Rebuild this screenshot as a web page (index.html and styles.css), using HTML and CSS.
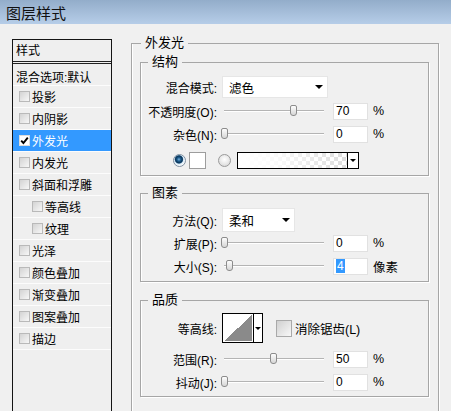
FILE: index.html
```html
<!DOCTYPE html>
<html>
<head>
<meta charset="utf-8">
<title>图层样式</title>
<link rel="stylesheet" href="styles.css">
</head>
<body>
<div class="titlebar">图层样式</div>
<div class="main">
  <div class="sidebar">
    <div class="side-head">样式</div>
    <div class="side-item plain">混合选项:默认</div>
    <div class="side-item"><span class="cb"></span>投影</div>
    <div class="side-item"><span class="cb"></span>内阴影</div>
    <div class="side-item selected"><span class="cb checked"><svg width="9" height="9" viewBox="0 0 9 9"><path d="M1.2 4.6 L3.4 7 L7.8 1.6" fill="none" stroke="#000" stroke-width="1.9"/></svg></span>外发光</div>
    <div class="side-item"><span class="cb"></span>内发光</div>
    <div class="side-item"><span class="cb"></span>斜面和浮雕</div>
    <div class="side-item sub"><span class="cb"></span>等高线</div>
    <div class="side-item sub"><span class="cb"></span>纹理</div>
    <div class="side-item"><span class="cb"></span>光泽</div>
    <div class="side-item"><span class="cb"></span>颜色叠加</div>
    <div class="side-item"><span class="cb"></span>渐变叠加</div>
    <div class="side-item"><span class="cb"></span>图案叠加</div>
    <div class="side-item"><span class="cb"></span>描边</div>
  </div>

  <fieldset class="group outer">
    <legend>外发光</legend>

    <fieldset class="group inner g-struct">
      <legend>结构</legend>
      <div class="row">
        <span class="lbl">混合模式:</span>
        <div class="select sel-wide"><span>滤色</span><span class="tri"></span></div>
      </div>
      <div class="row r2">
        <span class="lbl">不透明度(O):</span>
        <div class="slider"><div class="track"></div><div class="thumb" style="left:68px"></div></div>
        <div class="num">70</div><span class="unit">%</span>
      </div>
      <div class="row r1">
        <span class="lbl">杂色(N):</span>
        <div class="slider"><div class="track"></div><div class="thumb" style="left:-1px"></div></div>
        <div class="num">0</div><span class="unit">%</span>
      </div>
      <div class="row r4 colors">
        <span class="radio on"></span>
        <span class="swatch"></span>
        <span class="radio"></span>
        <div class="gradbox"><span class="gradfill"></span><span class="gdd"><span class="tri small"></span></span></div>
      </div>
    </fieldset>

    <fieldset class="group inner g-elem">
      <legend>图素</legend>
      <div class="row">
        <span class="lbl">方法(Q):</span>
        <div class="select sel-narrow"><span>柔和</span><span class="tri"></span></div>
      </div>
      <div class="row r1">
        <span class="lbl">扩展(P):</span>
        <div class="slider"><div class="track"></div><div class="thumb" style="left:-1px"></div></div>
        <div class="num">0</div><span class="unit">%</span>
      </div>
      <div class="row r1">
        <span class="lbl">大小(S):</span>
        <div class="slider"><div class="track"></div><div class="thumb" style="left:4px"></div></div>
        <div class="num"><span class="hl">4</span></div><span class="unit">像素</span>
      </div>
    </fieldset>

    <fieldset class="group inner g-qual">
      <legend>品质</legend>
      <div class="row tall">
        <span class="lbl">等高线:</span>
        <div class="contour"><span class="contour-img"></span><span class="contour-dd"><span class="tri small"></span></span></div>
        <span class="cb big"></span>
        <span class="cb-label">消除锯齿(L)</span>
      </div>
      <div class="row r5">
        <span class="lbl">范围(R):</span>
        <div class="slider"><div class="track"></div><div class="thumb" style="left:48px"></div></div>
        <div class="num">50</div><span class="unit">%</span>
      </div>
      <div class="row r1">
        <span class="lbl">抖动(J):</span>
        <div class="slider"><div class="track"></div><div class="thumb" style="left:-1px"></div></div>
        <div class="num">0</div><span class="unit">%</span>
      </div>
    </fieldset>
  </fieldset>
</div>
</body>
</html>
```
FILE: styles.css
```css
* { box-sizing: border-box; }
html, body { margin: 0; padding: 0; }
body {
  width: 451px;
  height: 411px;
  overflow: hidden;
  background: #f0f0f0;
  font-family: "Liberation Sans", "Noto Sans CJK SC", sans-serif;
  font-size: 12px;
  color: #000;
}

.titlebar {
  height: 24px;
  background: linear-gradient(#93adca, #b6cde8);
  font-family: "Noto Sans CJK SC", sans-serif;
  font-size: 15px;
  line-height: 25px;
  padding-left: 6px;
  color: #111;
}

.main {
  display: flex;
  align-items: flex-start;
  padding: 11px 0 0 12px;
}

/* ---------- sidebar ---------- */
.sidebar {
  flex: none;
  width: 100px;
  min-height: 420px;
  margin-top: 4px;
  border: 1px solid #141414;
  background: #efefef;
}
.side-head {
  height: 24px;
  padding-top: 2px;
  line-height: 19px;
  padding-left: 3px;
  border-bottom: 3px double #222;
}
.side-item {
  height: 22px;
  display: flex;
  align-items: center;
  padding-left: 6px;
  border-bottom: 1px solid #fcfcfc;
  white-space: nowrap;
}
.side-item.plain { padding-left: 3px; padding-top: 3px; }
.side-item.sub { padding-left: 19px; }
.side-item.selected { background: #3399ff; color: #fff; }

.cb {
  flex: none;
  display: inline-flex;
  align-items: center;
  justify-content: center;
  width: 11px;
  height: 11px;
  margin-right: 2px;
  border: 1px solid #b9b9b9;
  background: linear-gradient(135deg, #d3d3d3, #f7f7f7);
}
.cb.checked { background: #fff; border-color: #dcdcdc; }
.cb.big {
  width: 16px;
  height: 17px;
  margin-left: 13px;
  margin-right: 3px;
  border-color: #a9a9a9;
  background: linear-gradient(135deg, #d0d0d0, #f8f8f8);
}

/* ---------- group boxes ---------- */
fieldset.group {
  margin: 0;
  min-width: 0;
  border: 1px solid #a6a6a6;
  box-shadow: inset 1px 0 0 #fff, 1px 1px 0 #fff;
}
fieldset.group legend {
  padding: 0 4px;
  line-height: 16px;
  font-size: 13px;
}
fieldset.outer {
  flex: none;
  width: 308px;
  margin-left: 19px;
  padding: 3px 9px 40px 8px;
}
fieldset.outer > legend { margin-left: 1px; }
fieldset.inner {
  width: 289px;
  padding: 0;
}
fieldset.inner > legend { margin-left: 7px; }
fieldset.g-struct { padding-top: 6px; padding-bottom: 4px; }
fieldset.g-elem { margin-top: 9px; padding-top: 8px; padding-bottom: 4px; }
fieldset.g-qual { margin-top: 10px; padding-top: 5px; padding-bottom: 3px; }

.row {
  display: flex;
  align-items: center;
  height: 22px;
  white-space: nowrap;
}
.row.r1 { margin-top: 1px; }
.row.r2 { margin-top: 2px; }
.row.r4 { margin-top: 4px; }
.row.r5 { margin-top: 5px; }
.row.tall { height: 30px; }

.lbl {
  flex: none;
  width: 76px;
  margin-right: 5px;
  text-align: right;
}

/* dropdown */
.select {
  flex: none;
  display: flex;
  align-items: center;
  justify-content: space-between;
  height: 22px;
  padding: 0 4px 0 6px;
  background: #fff;
  border: 1px solid #e6e6e6;
  font-size: 12.5px;
}
.sel-wide { width: 106px; }
.sel-narrow { width: 73px; height: 24px; }
.tri {
  width: 0;
  height: 0;
  border-left: 4px solid transparent;
  border-right: 4px solid transparent;
  border-top: 4px solid #000;
}
.tri.small {
  border-left-width: 3px;
  border-right-width: 3px;
  border-top-width: 3px;
}

/* slider */
.slider {
  flex: none;
  position: relative;
  width: 106px;
  height: 22px;
  margin-right: 5px;
  padding: 10px 4px 0 2px;
}
.track {
  height: 2px;
  border-top: 1px solid #b4b4b4;
  border-bottom: 1px solid #fff;
}
.thumb {
  position: absolute;
  top: 5px;
  width: 7px;
  height: 11px;
  border: 1px solid #8c8c8c;
  border-radius: 2px 2px 3px 3px;
  background: linear-gradient(#fdfdfd, #d6d6d6);
}

/* numeric field */
.num {
  flex: none;
  width: 35px;
  height: 17px;
  margin-right: 5px;
  padding-left: 2px;
  line-height: 15px;
  font-size: 12px;
  background: #fff;
  border: 1px solid #e1e1e1;
}
.hl {
  display: inline-block;
  padding: 0 1px;
  background: #3399ff;
  color: #fff;
  line-height: 14px;
}
.unit { font-size: 12.5px; }

/* colour row */
.colors { padding-left: 32px; }
.radio {
  flex: none;
  width: 13px;
  height: 13px;
  border-radius: 50%;
  border: 1px solid #9a9a9a;
  background: radial-gradient(circle at 50% 40%, #ffffff 0, #ececec 45%, #cfcfcf 100%);
}
.radio.on {
  border-color: #7f8fa0;
  background: radial-gradient(circle at 45% 40%, #7fb4dc 0, #1d5d8f 1.8px, #0c3558 3.4px, #2b5f86 3.9px, #d9e8f4 4.6px, #f4f8fb 6px);
}
.swatch {
  flex: none;
  width: 17px;
  height: 17px;
  margin: 0 12px 0 3px;
  background: #fff;
  border: 1px solid #9d9d9d;
}
.gradbox {
  flex: none;
  display: flex;
  width: 122px;
  height: 17px;
  margin-left: 6px;
  border: 1px solid #000;
}
.gradfill {
  flex: 1;
  background:
    linear-gradient(to right, #fff 0%, rgba(255,255,255,0.85) 35%, rgba(255,255,255,0) 100%),
    conic-gradient(#dcdcdc 25%, #fff 25% 50%, #dcdcdc 50% 75%, #fff 75%);
  background-size: 100% 100%, 8px 8px;
}
.gdd {
  flex: none;
  display: flex;
  align-items: center;
  justify-content: center;
  width: 11px;
  border-left: 1px solid #000;
  background: #fff;
}

/* contour */
.contour {
  flex: none;
  display: flex;
  width: 41px;
  height: 30px;
  border: 1px solid #000;
  background: #fff;
}
.contour-img {
  flex: none;
  width: 30px;
  border: 1px solid #fff;
  background: linear-gradient(to top left, #8a8a8a 50%, #fff 50%);
}
.contour-dd {
  flex: 1;
  display: flex;
  align-items: center;
  justify-content: center;
  border-left: 1px solid #000;
}
.cb-label { font-size: 12.5px; }
```
